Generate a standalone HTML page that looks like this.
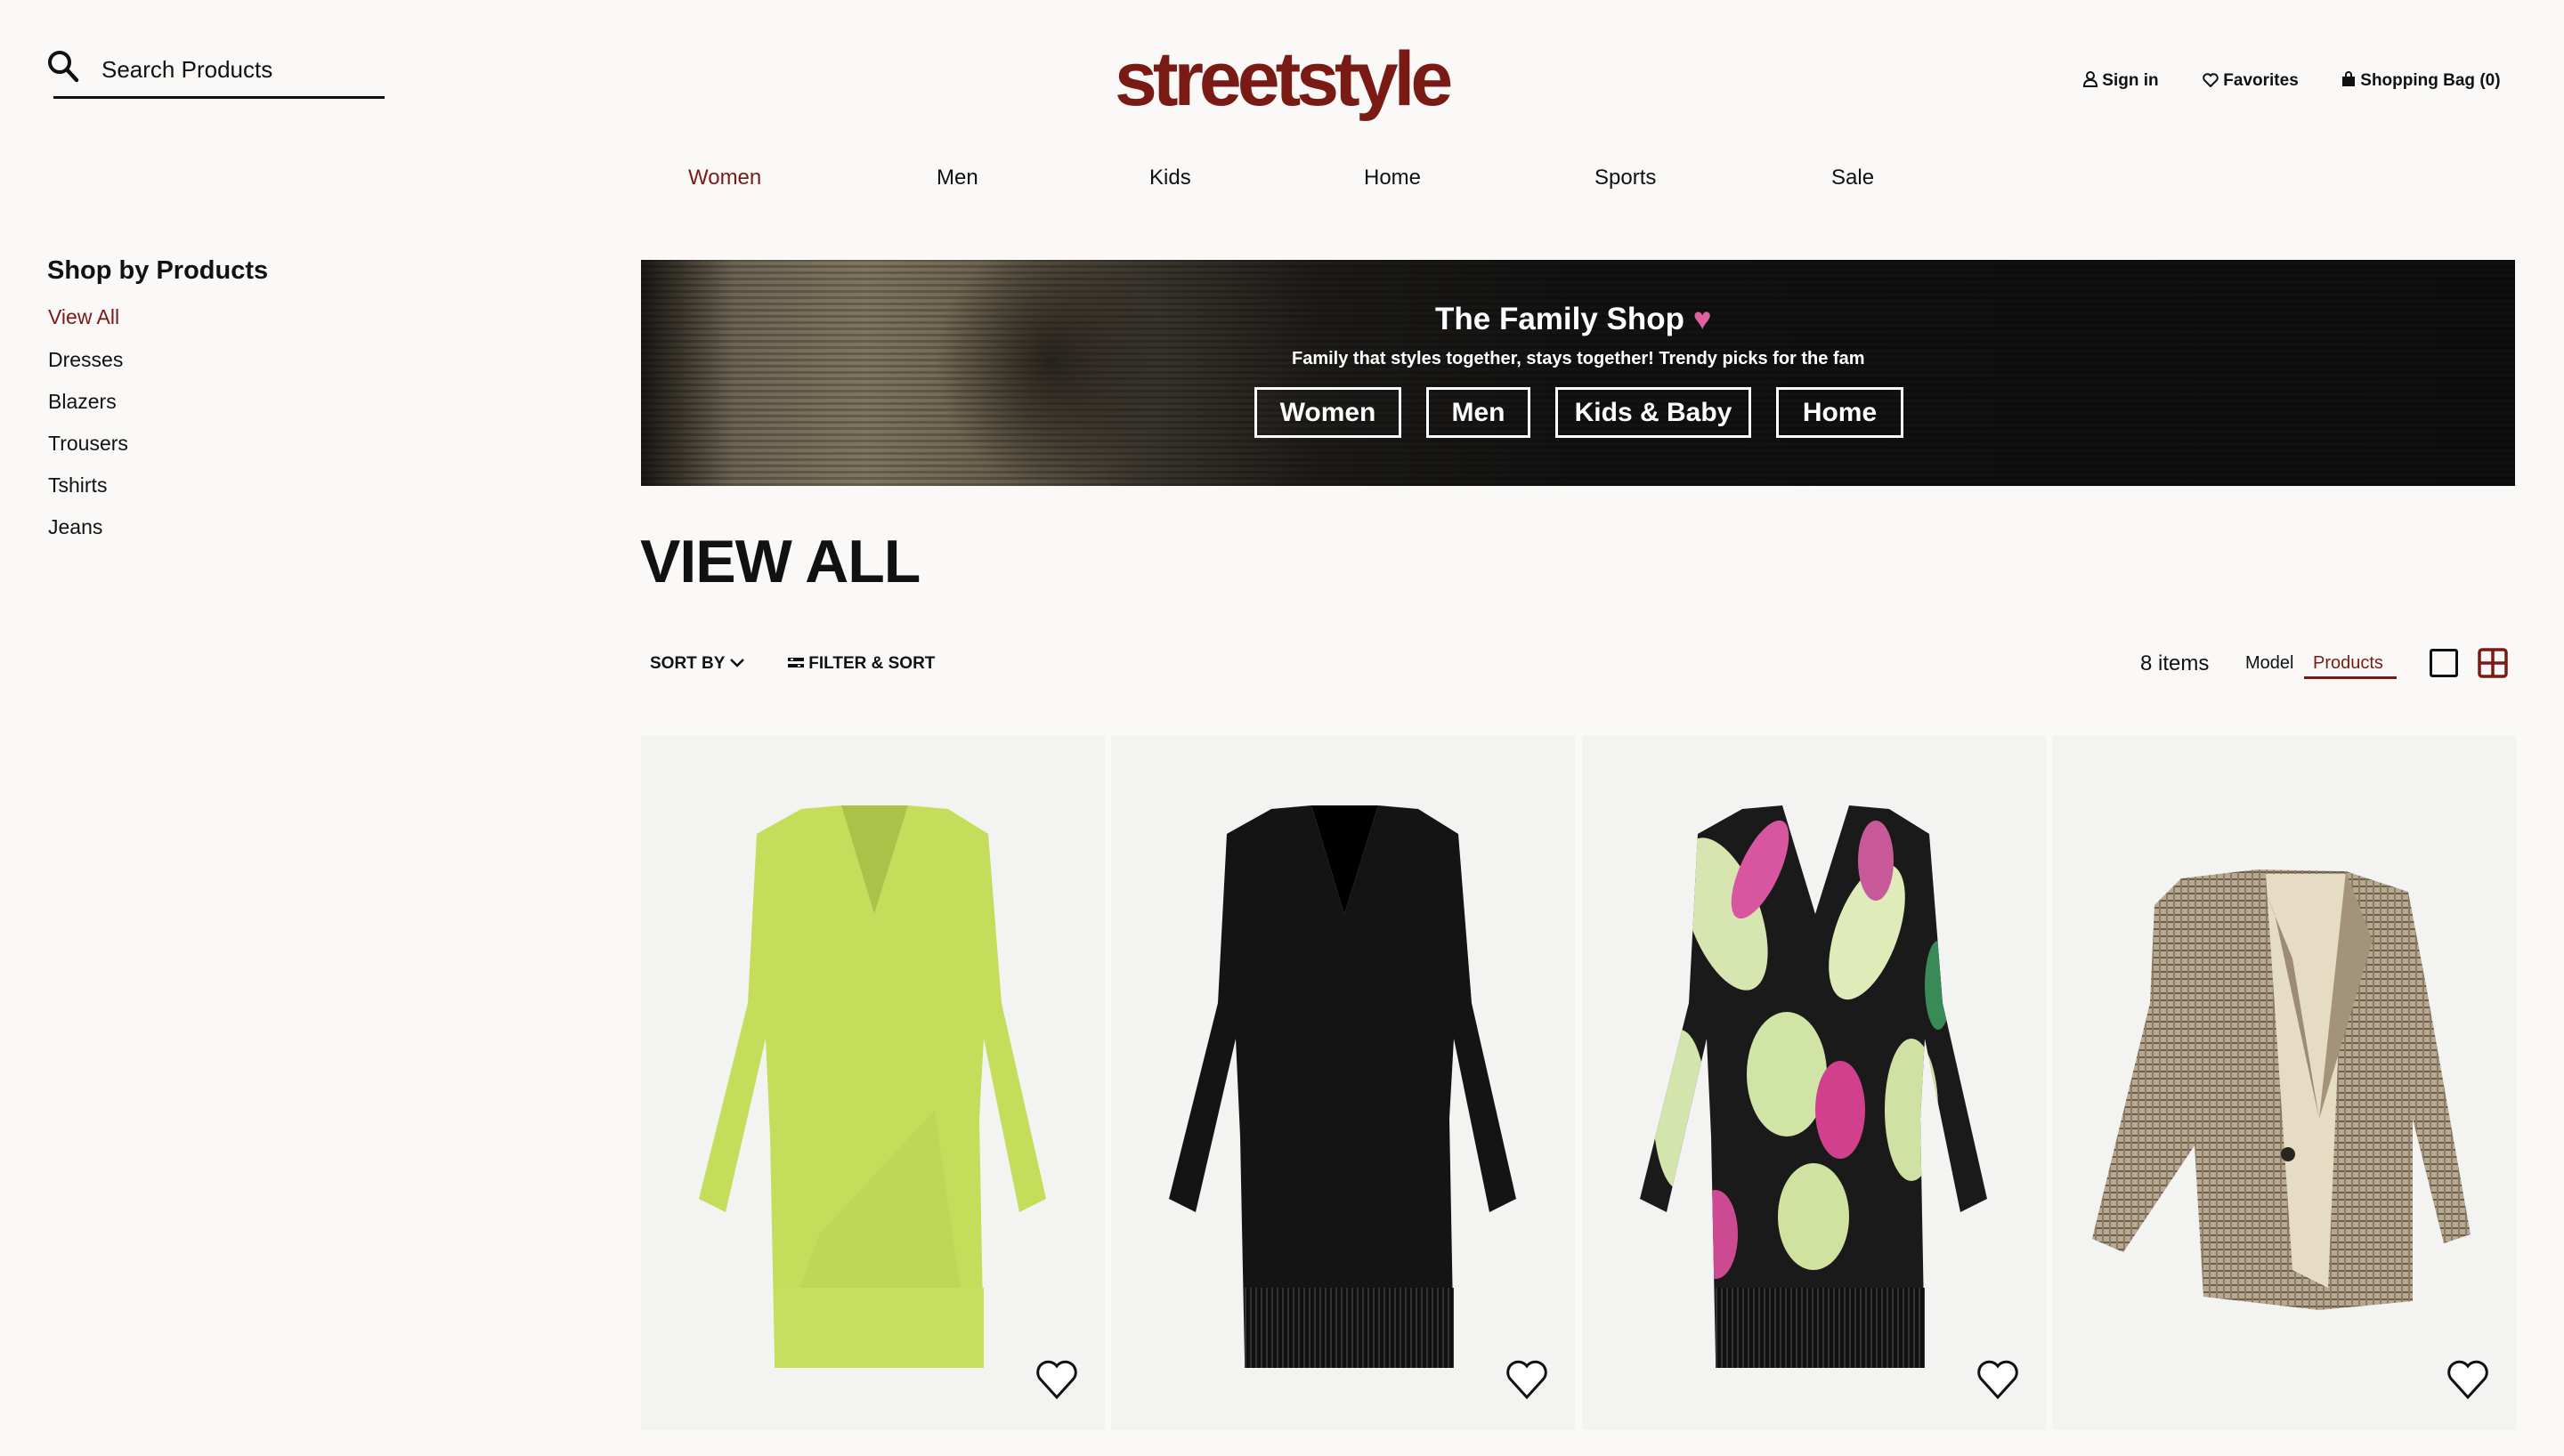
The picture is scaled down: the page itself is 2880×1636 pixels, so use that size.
<!DOCTYPE html>
<html><head><meta charset="utf-8"><style>
*{margin:0;padding:0;box-sizing:border-box}
body{width:2880px;height:1636px;background:#faf9f7;font-family:"Liberation Sans",sans-serif;color:#111;position:relative;overflow:hidden}
.a{position:absolute;white-space:nowrap}
.nav{top:184px;font-size:24px;font-weight:500}
.side{left:54px;font-size:23px}
.btn{position:absolute;top:435px;height:57px;border:3px solid #fff;color:#fff;font-size:30px;font-weight:bold;display:flex;align-items:center;justify-content:center}
.card{position:absolute;top:827px;width:521px;height:780px;background:#f3f3f2}
.card svg{position:absolute;left:0;top:0}
</style></head><body>
<svg class="a" style="left:52px;top:55px" width="38" height="40" viewBox="0 0 38 40"><circle cx="15" cy="15" r="11" fill="none" stroke="#111" stroke-width="4"/><line x1="23" y1="23" x2="34" y2="35" stroke="#111" stroke-width="4.5" stroke-linecap="round"/></svg>
<div class="a" style="left:114px;top:63px;font-size:26px">Search Products</div>
<div class="a" style="left:60px;top:108px;width:372px;height:3px;background:#111"></div>
<div class="a" style="left:1252px;top:40px;font-size:86px;font-weight:bold;color:#7a1a14;letter-spacing:-5px">streetstyle</div>
<div class="a" style="left:2340px;top:80px;font-size:19px;font-weight:600">
<svg width="16" height="18" viewBox="0 0 16 18" style="vertical-align:-2px"><circle cx="8" cy="5" r="4" fill="none" stroke="#111" stroke-width="2"/><path d="M1 17 Q1 10 8 10 Q15 10 15 17 Z" fill="none" stroke="#111" stroke-width="2"/></svg> Sign in</div>
<div class="a" style="left:2474px;top:80px;font-size:19px;font-weight:600">
<svg width="18" height="16" viewBox="0 0 18 16" style="vertical-align:-2px"><path d="M9 15 L2 8 A4 4 0 0 1 9 3 A4 4 0 0 1 16 8 Z" fill="none" stroke="#111" stroke-width="2"/></svg> Favorites</div>
<div class="a" style="left:2630px;top:80px;font-size:19px;font-weight:600">
<svg width="16" height="18" viewBox="0 0 16 18" style="vertical-align:-2px"><path d="M5 6 V4 A3 3 0 0 1 11 4 V6" fill="none" stroke="#111" stroke-width="2"/><rect x="1" y="6" width="14" height="11" fill="#111"/></svg> Shopping Bag (0)</div>
<div class="a nav" style="left:773px;top:186px;color:#7a1a14">Women</div>
<div class="a nav" style="left:1052px;top:186px">Men</div>
<div class="a nav" style="left:1291px;top:186px">Kids</div>
<div class="a nav" style="left:1532px;top:186px">Home</div>
<div class="a nav" style="left:1791px;top:186px">Sports</div>
<div class="a nav" style="left:2057px;top:186px">Sale</div>
<div class="a" style="left:53px;top:288px;font-size:29px;font-weight:600">Shop by Products</div>
<div class="a side" style="top:343px;color:#7a1a14">View All</div>
<div class="a side" style="top:391px">Dresses</div>
<div class="a side" style="top:438px">Blazers</div>
<div class="a side" style="top:485px">Trousers</div>
<div class="a side" style="top:532px">Tshirts</div>
<div class="a side" style="top:579px">Jeans</div>
<div class="a" style="left:720px;top:292px;width:2105px;height:254px;background:linear-gradient(90deg,#1a1814 0%,#3a352c 2%,#6e6554 5%,#80765f 12%,#6e6450 18%,#3e3930 26%,#1e1c19 36%,#121212 50%,#0f0f0f 100%)">
<div style="position:absolute;inset:0;background:repeating-linear-gradient(0deg,rgba(0,0,0,.22) 0 3px,rgba(255,255,255,0) 3px 7px)"></div>
<div style="position:absolute;left:330px;top:0;width:260px;height:254px;background:radial-gradient(ellipse at 50% 45%,rgba(25,22,18,.75),rgba(25,22,18,0) 70%)"></div>
</div>
<div class="a" style="left:1612px;top:339px;font-size:35px;font-weight:bold;color:#fff">The Family Shop <span style="color:#e060a0">♥</span></div>
<div class="a" style="left:1451px;top:392px;font-size:20px;font-weight:600;color:#fff">Family that styles together, stays together! Trendy picks for the fam</div>
<div class="btn" style="left:1409px;width:165px">Women</div>
<div class="btn" style="left:1602px;width:117px">Men</div>
<div class="btn" style="left:1747px;width:220px">Kids &amp; Baby</div>
<div class="btn" style="left:1995px;width:143px">Home</div>
<div class="a" style="left:719px;top:592px;font-size:68px;font-weight:bold;letter-spacing:-1px">VIEW ALL</div>
<div class="a" style="left:730px;top:735px;font-size:19px;font-weight:bold">SORT BY <svg width="18" height="12" viewBox="0 0 18 12"><path d="M2 2 L9 9 L16 2" fill="none" stroke="#111" stroke-width="2.5"/></svg></div>
<div class="a" style="left:885px;top:735px;font-size:19px;font-weight:bold"><svg width="18" height="14" viewBox="0 0 18 14" style="vertical-align:-1px"><rect x="0" y="1" width="18" height="4" fill="#111"/><rect x="0" y="8" width="18" height="4" fill="#111"/><rect x="3" y="2" width="3" height="2" fill="#fff"/><rect x="11" y="9" width="3" height="2" fill="#fff"/></svg> FILTER &amp; SORT</div>
<div class="a" style="left:2404px;top:732px;font-size:24px">8 items</div>
<div class="a" style="left:2522px;top:734px;font-size:20px">Model</div>
<div class="a" style="left:2598px;top:734px;font-size:20px;color:#7a1a14">Products</div>
<div class="a" style="left:2588px;top:760px;width:104px;height:3px;background:#7a1a14"></div>
<div class="a" style="left:2729px;top:729px;width:32px;height:32px;border:3.5px solid #111;border-radius:3px"></div>
<svg class="a" style="left:2783px;top:728px" width="34" height="34" viewBox="0 0 34 34"><rect x="2" y="2" width="30" height="30" rx="3" fill="none" stroke="#7a1a14" stroke-width="3.5"/><line x1="17" y1="2" x2="17" y2="32" stroke="#7a1a14" stroke-width="3.5"/><line x1="2" y1="17" x2="32" y2="17" stroke="#7a1a14" stroke-width="3.5"/></svg>

<svg width="0" height="0" style="position:absolute"><defs>
<path id="dress" d="M180 82 L225 78 L262 200 L300 78 L345 82 L390 110 L405 300 L455 520 L425 535 L385 340 L380 430 L385 700 L150 700 L145 450 L140 340 L95 535 L65 520 L120 300 L130 110 Z"/>
<pattern id="fr" width="6" height="10" patternUnits="userSpaceOnUse"><rect width="6" height="10" fill="#111"/><rect width="2" height="10" fill="#333"/></pattern>
<pattern id="plaid" width="8" height="8" patternUnits="userSpaceOnUse"><rect width="8" height="8" fill="#b7a78e"/><rect width="8" height="2" fill="#6e604f"/><rect width="2" height="8" fill="#8a7b66"/></pattern>
<clipPath id="dc"><use href="#dress"/></clipPath>
<path id="heart" d="M25 45 L6 24 A11 11 0 0 1 25 10 A11 11 0 0 1 44 24 Z"/>
</defs></svg>

<div class="card" style="left:720px"><svg width="521" height="780">
<use href="#dress" fill="#c4dd5a"/><path d="M225 78 L262 200 L300 78" fill="#a9c247"/>
<path d="M200 560 L330 420 L370 700 L150 700 Z" fill="#bdd655" opacity=".8"/>
<rect x="150" y="620" width="235" height="90" fill="#c7df5e"/>
<use href="#heart" transform="translate(442,698)" fill="#fff" stroke="#111" stroke-width="3"/></svg></div>

<div class="card" style="left:1248px"><svg width="521" height="780">
<use href="#dress" fill="#141414"/><path d="M225 78 L262 200 L300 78" fill="#000"/>
<rect x="150" y="620" width="235" height="90" fill="url(#fr)"/>
<use href="#heart" transform="translate(442,698)" fill="#fff" stroke="#111" stroke-width="3"/></svg></div>

<div class="card" style="left:1777px"><svg width="521" height="780">
<g clip-path="url(#dc)"><rect width="521" height="780" fill="#1a1a1a"/>
<ellipse cx="160" cy="200" rx="40" ry="90" fill="#d7e6b0" transform="rotate(-20 160 200)"/>
<ellipse cx="320" cy="220" rx="35" ry="80" fill="#e0ebba" transform="rotate(20 320 220)"/>
<ellipse cx="230" cy="380" rx="45" ry="70" fill="#d0e4a6"/>
<ellipse cx="370" cy="420" rx="30" ry="80" fill="#cfe2a4"/>
<ellipse cx="110" cy="420" rx="30" ry="90" fill="#d3e4ad"/>
<ellipse cx="200" cy="150" rx="22" ry="60" fill="#d856a0" transform="rotate(25 200 150)"/>
<ellipse cx="290" cy="420" rx="28" ry="55" fill="#d0408c"/>
<ellipse cx="150" cy="560" rx="25" ry="50" fill="#cc4a92"/>
<ellipse cx="330" cy="140" rx="20" ry="45" fill="#c85a9a"/>
<ellipse cx="260" cy="540" rx="40" ry="60" fill="#cfe29f"/>
<ellipse cx="100" cy="300" rx="15" ry="50" fill="#3a8a58"/>
<ellipse cx="400" cy="280" rx="15" ry="50" fill="#3a8a58"/>
</g>
<rect x="150" y="620" width="235" height="90" fill="url(#fr)"/>
<use href="#heart" transform="translate(442,698)" fill="#fff" stroke="#111" stroke-width="3"/></svg></div>

<div class="card" style="left:2305px"><svg width="521" height="780">
<path d="M145 160 L230 150 L330 152 L400 175 L420 280 L470 560 L440 570 L405 430 L405 635 L300 645 L170 630 L160 460 L80 580 L45 565 L110 300 L115 190 Z" fill="url(#plaid)"/>
<path d="M240 155 L330 155 L310 620 L270 600 Z" fill="#e6dcc4"/>
<path d="M230 152 L270 250 L300 430 L250 200 Z" fill="#9c8c75"/>
<path d="M330 152 L360 230 L300 430 Z" fill="#a4937b"/>
<circle cx="265" cy="470" r="8" fill="#2a2520"/>
<use href="#heart" transform="translate(442,698)" fill="#fff" stroke="#111" stroke-width="3"/></svg></div>
</body></html>
